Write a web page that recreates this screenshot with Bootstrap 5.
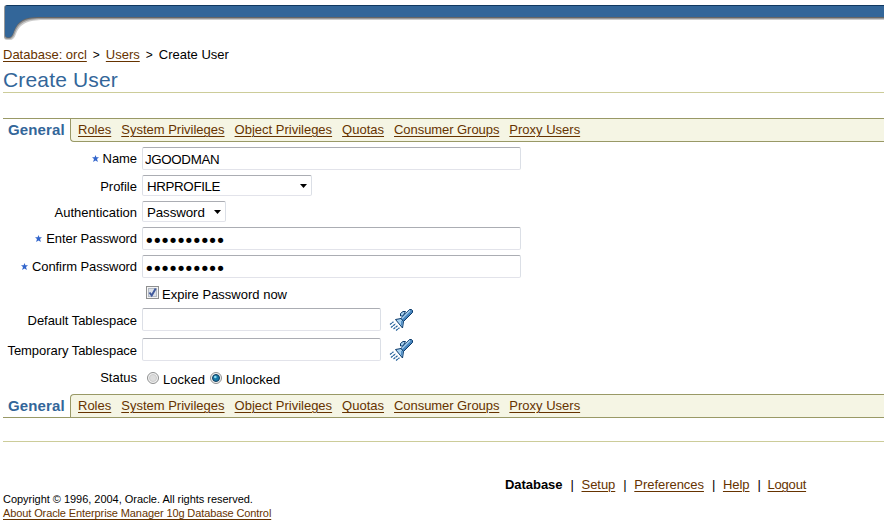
<!DOCTYPE html>
<html lang="en">
<head>
<meta charset="utf-8">
<meta name="viewport" content="width=device-width, initial-scale=1">
<title>Create User</title>
<link href="https://cdn.jsdelivr.net/npm/bootstrap@5.3.0/dist/css/bootstrap.min.css" rel="stylesheet">
<style>
body{font:13px/16px "Liberation Sans",Arial,sans-serif;color:#000;overflow:hidden;background:#fff}
a{color:#630;text-decoration:underline;text-underline-offset:2px;text-decoration-thickness:1px}
a:hover{color:#930}
.banner{height:41px}
.crumbs{padding:6px 0 0 3px;height:28px;gap:6px}
.crumbs span.sep{font-size:12px;width:7px}
.page-title{font-size:21px;line-height:22px;letter-spacing:.16px;font-weight:400;color:#369;margin:0 0 0 3px;height:24px;border-bottom:1px solid #cc9}
.tabs-strip{height:24px;margin-left:3px}
.strip-top{margin-top:25px}
.tab-current{width:67px;padding-left:5px;font-weight:700;font-size:15px;letter-spacing:.12px;color:#369;line-height:22px}
.tab-links{background:#f5f5e4;border:1px solid #996;border-right:0;gap:10px;padding-left:7px;line-height:21px}
.tab-links a:nth-child(5){letter-spacing:-.06px}
.strip-top .tab-current{border-top:1px solid #996}
.strip-top .tab-links{border-bottom-left-radius:4px}
.strip-bottom .tab-current{border-bottom:1px solid #996;line-height:24px}
.strip-bottom .tab-links{border-top-left-radius:4px}
.user-form{padding-top:5px;height:252px}
.field-row{height:23px;margin-bottom:5px}
.field-row.short{height:21px}
.field-label{width:137px;margin-right:5px;text-align:right;flex:none;white-space:nowrap}
.short .field-label{padding-top:2px}
.req{width:7px;height:7px;margin-right:4px;vertical-align:1px}
.req-label{letter-spacing:-.07px}
.form-control.field,.form-select.field{font:13.33px/17px "Liberation Sans",Arial,sans-serif;letter-spacing:-.35px;color:#000;background-color:#fff;border:1px solid #e2e3ea;border-top-color:#abadb3;border-left-color:#dcdfe6;border-right-color:#dbdfe6;border-radius:2px;padding:2px 2px 1px;height:23px;min-height:0;width:379px}
.form-control.half{width:239px}
.form-select.field{height:21px;padding:1px 16px 0 4px;width:170px;background-image:url("data:image/svg+xml,%3Csvg xmlns='http://www.w3.org/2000/svg' width='7' height='4'%3E%3Cpath d='M0 0h7L3.5 4z'/%3E%3C/svg%3E");background-size:7px 4px;background-position:right 4px top 8px}
.form-select.auth{width:84px;letter-spacing:-.1px}
.form-control.secret{font-family:"DejaVu Sans",sans-serif;font-size:18px;letter-spacing:-2.7px;padding:4px 1px 0}
.expire{padding-left:146px;height:20px;margin:5px 0}
.expire span{margin:4px 0 0 3px}
.tick{margin-top:3px}
.space{margin-bottom:7px}
.space .field-label{padding-top:2px;letter-spacing:-.05px}
.torch{margin-left:8px}
.status{height:20px}
.status .field-label{padding-top:2px}
.dot{margin:4px 4px 0 5px}
.opt{margin-top:4px}
.rule{margin:23px 0 0 3px;height:1px;background:#cc9}
.site-links{margin:35px 0 0 505px;gap:8px}
.site-links span{width:3px}
.site-links a,.site-links b{letter-spacing:-.04px}
.site-links a:last-child{letter-spacing:-.2px;margin-left:-1px}
.legal{margin:-1px 0 0 3px;font-size:11px;line-height:14px;letter-spacing:-.03px}
.legal a{letter-spacing:-.11px}
</style>
</head>
<body>
<header class="banner">
<svg class="d-block" width="100%" height="41" aria-hidden="true">
<path d="M4 8q0-3 3-3H2000V20H44C27 20 20 24 16 34Q14 40 10 40H7Q4 40 4 37z" fill="#ccc"/>
<path d="M4 8q0-3 3-3H2000V19H42C25 19 19 23 15 33Q13 39 9 39H7Q4 39 4 36z" fill="#999"/>
<path d="M5 8q0-3 3-3H2000V18H40C24 18 18 22 14 32Q12 38 9 38H8Q5 38 5 35z" fill="#666"/>
<path d="M5 8q0-3 3-3H2000V17H39C24 17 18 21 14 31Q12 37.500 9 37.500H8Q5 37.500 5 34z" fill="#369"/>
<path d="M7 5H2000V6H6z" fill="#103860"/>
</svg>
</header>
<nav class="crumbs d-flex"><a href="#">Database: orcl</a><span class="sep">&gt;</span><a href="#">Users</a><span class="sep">&gt;</span><span>Create User</span></nav>
<h1 class="page-title">Create User</h1>
<main>
<nav class="tabs-strip strip-top d-flex"><span class="tab-current">General</span><div class="tab-links d-flex flex-grow-1"><a href="#">Roles</a><a href="#">System Privileges</a><a href="#">Object Privileges</a><a href="#">Quotas</a><a href="#">Consumer Groups</a><a href="#">Proxy Users</a></div></nav>
<form class="user-form">
<div class="field-row d-flex align-items-center"><label class="field-label req-label" for="nm"><svg class="req" viewBox="0 0 7 7"><path d="M3.500 0 4.400 2.300H7L5 4.100 5.900 7 3.500 5.400 1.100 7 2 4.100 0 2.300H2.600z" fill="#36c"/></svg>Name</label><input id="nm" class="form-control field" value="JGOODMAN"></div>
<div class="field-row short d-flex align-items-center"><label class="field-label" for="pf">Profile</label><select id="pf" class="form-select field"><option>HRPROFILE</option></select></div>
<div class="field-row short d-flex align-items-center"><label class="field-label" for="au">Authentication</label><select id="au" class="form-select field auth"><option>Password</option></select></div>
<div class="field-row d-flex align-items-center"><label class="field-label req-label" for="p1"><svg class="req" viewBox="0 0 7 7"><path d="M3.500 0 4.400 2.300H7L5 4.100 5.900 7 3.500 5.400 1.100 7 2 4.100 0 2.300H2.600z" fill="#36c"/></svg>Enter Password</label><input id="p1" type="password" class="form-control field secret" value="xxxxxxxxxx"></div>
<div class="field-row d-flex align-items-center"><label class="field-label req-label" for="p2"><svg class="req" viewBox="0 0 7 7"><path d="M3.500 0 4.400 2.300H7L5 4.100 5.900 7 3.500 5.400 1.100 7 2 4.100 0 2.300H2.600z" fill="#36c"/></svg>Confirm Password</label><input id="p2" type="password" class="form-control field secret" value="xxxxxxxxxx"></div>
<div class="field-row expire d-flex"><svg class="tick" width="13" height="13"><rect x=".5" y=".5" width="12" height="12" fill="#f4f4f4" stroke="#8e8f8f"/><rect x="2.500" y="2.500" width="8" height="8" fill="#dce1e8" stroke="#b4bac4"/><path d="M3.500 6.500 5.700 9.500 9.700 2.500" fill="none" stroke="#40599c" stroke-width="2"/></svg><span>Expire Password now</span></div>
<div class="field-row space d-flex align-items-center"><label class="field-label" for="dt">Default Tablespace</label><input id="dt" class="form-control field half"><svg class="torch" width="25" height="25"><use href="#torch"/></svg></div>
<div class="field-row space d-flex align-items-center"><label class="field-label" for="tt">Temporary Tablespace</label><input id="tt" class="form-control field half"><svg class="torch" width="25" height="25">
<g id="torch"><path d="M11.500 9V6.500L14 4.500H16.500L14 9z" fill="#a9d2f0" stroke="#0b3a6b"/><path d="M11.500 12 20.500 2.500H22.500L23.500 3.500V5.500L14 15z" fill="#4684bd" stroke="#0b3a6b"/><path d="M13 11.500 21 3.500" stroke="#a5cdec" stroke-width="1.500"/><path d="M6.500 12.500 12 11.500 14.500 14.500 13.500 21z" fill="#a9d2f0" stroke="#0b3a6b"/><path d="M13 14 12.800 18.500" stroke="#4684bd" stroke-width="1.500"/><path d="M1 17.500 4.500 14.800M2 20.500 6.500 16.800M4.500 22 8.500 18.800M7 23.500 10.500 20.800" stroke="#28649c" stroke-width="1.200" stroke-dasharray="2.300 .5"/></g></svg></div>
<div class="field-row status d-flex"><span class="field-label">Status</span><svg class="dot" width="12" height="12"><circle cx="6" cy="6" r="5.500" fill="#f2f2f2" stroke="#8e8f8f"/><circle cx="6" cy="6" r="3.500" fill="#ddd" stroke="#ccc"/></svg><span class="opt">Locked</span><svg class="dot" width="12" height="12"><circle cx="6" cy="6" r="5.500" fill="#f2f2f2" stroke="#8e8f8f"/><circle cx="6" cy="6" r="3.500" fill="#1679a8" stroke="#133c5c"/><circle cx="5.300" cy="5" r="1.300" fill="#8cdcf2"/></svg><span class="opt">Unlocked</span></div>
</form>
<nav class="tabs-strip strip-bottom d-flex"><span class="tab-current">General</span><div class="tab-links d-flex flex-grow-1"><a href="#">Roles</a><a href="#">System Privileges</a><a href="#">Object Privileges</a><a href="#">Quotas</a><a href="#">Consumer Groups</a><a href="#">Proxy Users</a></div></nav>
<div class="rule"></div>
</main>
<footer>
<nav class="site-links d-flex"><b>Database</b><span>|</span><a href="#">Setup</a><span>|</span><a href="#">Preferences</a><span>|</span><a href="#">Help</a><span>|</span><a href="#">Logout</a></nav>
<p class="legal">Copyright © 1996, 2004, Oracle. All rights reserved.<br><a href="#">About Oracle Enterprise Manager 10g Database Control</a></p>
</footer>
<script src="https://cdn.jsdelivr.net/npm/bootstrap@5.3.0/dist/js/bootstrap.bundle.min.js"></script>
</body>
</html>
